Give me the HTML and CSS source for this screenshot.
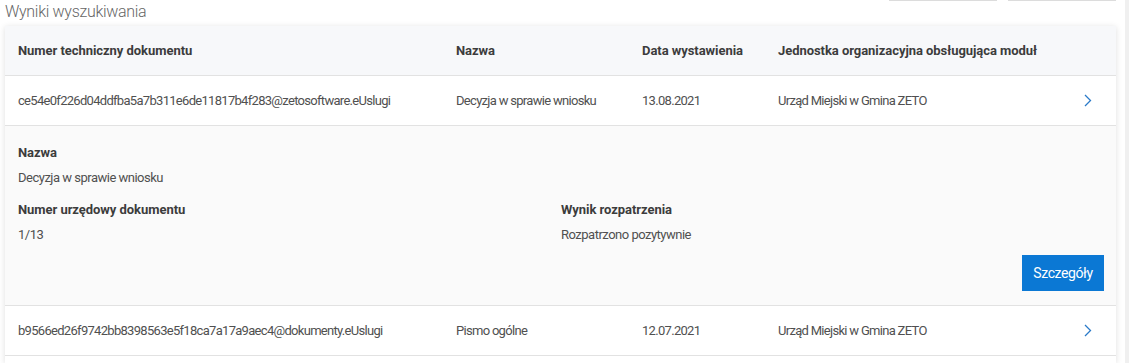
FILE: index.html
```html
<!DOCTYPE html>
<html lang="pl">
<head>
<meta charset="utf-8">
<link rel="stylesheet" href="styles.css">
</head>
<body>
<div class="page">
  <div class="main">
    <div class="topbar">
      <h2 class="title">Wyniki wyszukiwania</h2>
      <div class="topbtns">
        <span class="tbtn"></span>
        <span class="tbtn"></span>
      </div>
    </div>
    <div class="card">
      <div class="row head">
        <div class="c1">Numer techniczny dokumentu</div>
        <div class="c2">Nazwa</div>
        <div class="c3">Data wystawienia</div>
        <div class="c4">Jednostka organizacyjna obsługująca moduł</div>
        <div class="c5"></div>
      </div>
      <div class="row">
        <div class="c1">ce54e0f226d04ddfba5a7b311e6de11817b4f283@zetosoftware.eUslugi</div>
        <div class="c2">Decyzja w sprawie wniosku</div>
        <div class="c3">13.08.2021</div>
        <div class="c4">Urząd Miejski w Gmina ZETO</div>
        <div class="c5"><svg class="chev" width="8" height="13" viewBox="0 0 8 13"><path d="M1 1 L6.5 6.5 L1 12" fill="none" stroke="#2a7ac8" stroke-width="1.3"/></svg></div>
      </div>
      <div class="detail">
        <div class="field">
          <div class="lbl">Nazwa</div>
          <div class="val">Decyzja w sprawie wniosku</div>
        </div>
        <div class="pair">
          <div class="field">
            <div class="lbl">Numer urzędowy dokumentu</div>
            <div class="val">1/13</div>
          </div>
          <div class="field">
            <div class="lbl">Wynik rozpatrzenia</div>
            <div class="val">Rozpatrzono pozytywnie</div>
          </div>
        </div>
        <div class="actions"><button class="btn">Szczegóły</button></div>
      </div>
      <div class="row">
        <div class="c1">b9566ed26f9742bb8398563e5f18ca7a17a9aec4@dokumenty.eUslugi</div>
        <div class="c2">Pismo ogólne</div>
        <div class="c3">12.07.2021</div>
        <div class="c4">Urząd Miejski w Gmina ZETO</div>
        <div class="c5"><svg class="chev" width="8" height="13" viewBox="0 0 8 13"><path d="M1 1 L6.5 6.5 L1 12" fill="none" stroke="#2a7ac8" stroke-width="1.3"/></svg></div>
      </div>
      <div class="filler"></div>
    </div>
  </div>
  <div class="scroll"></div>
</div>
</body>
</html>
```
FILE: styles.css
```css
* { box-sizing: border-box; }
html, body { margin: 0; padding: 0; background: #fff; }
body {
  font-family: Roboto, "Liberation Sans", sans-serif;
  font-size: 13px;
  color: #505050;
  height: 363px;
  overflow: hidden;
}
.page {
  display: flex;
  height: 363px;
}
.main {
  flex: 1;
  padding: 0 9px 0 5px;
}
.scroll {
  width: 6px;
  background: #f0f0f0;
}
.topbar {
  display: flex;
  justify-content: space-between;
  height: 26px;
}
.title {
  margin: 2px 0 0 0;
  font-size: 16px;
  font-weight: 300;
  color: #666;
  letter-spacing: -0.3px;
}
.topbtns {
  display: flex;
  gap: 11px;
  align-items: flex-start;
  margin-right: 0;
}
.tbtn {
  display: block;
  width: 108px;
  height: 1px;
  border-bottom: 1px solid #dcdcdc;
}
.card {
  background: #fff;
  box-shadow: 0 1px 6px rgba(0,0,0,0.13);
}
.row {
  display: flex;
  align-items: center;
  height: 50px;
  border-bottom: 1px solid #e2e2e2;
  padding-left: 13px;
  letter-spacing: -0.7px;
}
.row.head {
  background: #f7f8fa;
  font-weight: 700;
  color: #3c3c3c;
  height: 50px;
  letter-spacing: -0.05px;
}
.filler { height: 7px; }
.c1 { width: 438px; }
.c2 { width: 186px; }
.c3 { width: 136px; }
.c4 { width: 306px; }
.c5 { flex: 1; display: flex; align-items: center; }
.chev { display: block; }
.detail {
  background: #fafafa;
  border-bottom: 1px solid #e2e2e2;
  padding: 18px 12px 14px 13px;
  letter-spacing: -0.5px;
}
.field .lbl {
  font-weight: 700;
  color: #3c3c3c;
  line-height: 18px;
  letter-spacing: -0.05px;
}
.field .val {
  margin-top: 7px;
  line-height: 18px;
}
.pair {
  display: flex;
  margin-top: 14px;
}
.pair .field { width: 543px; }
.actions {
  display: flex;
  justify-content: flex-end;
  margin-top: 11px;
}
.btn {
  width: 82px;
  height: 36px;
  border: 0;
  background: #0b78d4;
  color: #fff;
  font-family: inherit;
  font-size: 14px;
  font-weight: 400;
  letter-spacing: -0.4px;
}
```
